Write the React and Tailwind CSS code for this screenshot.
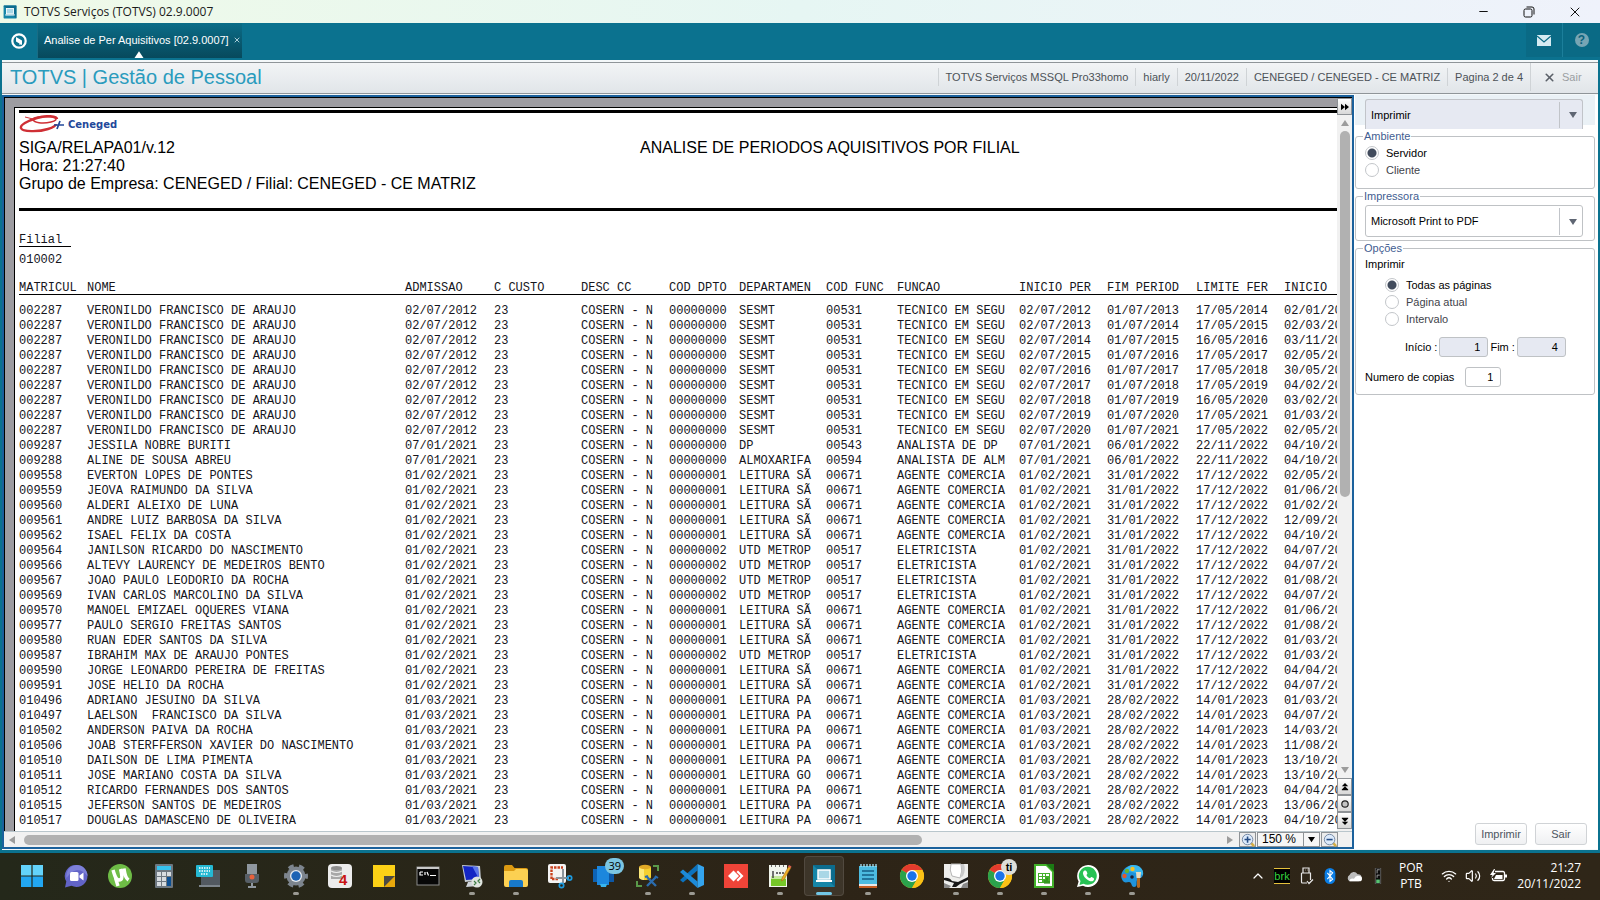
import React, { useState } from 'react';
import { ChevronUp, Wifi, Volume2, X, Minus } from 'lucide-react';

const COLUMNS = [
  { label: 'MATRICUL', width: 'w-[68px]' },
  { label: 'NOME', width: 'w-[318px]' },
  { label: 'ADMISSAO', width: 'w-[89px]' },
  { label: 'C CUSTO', width: 'w-[87px]' },
  { label: 'DESC CC', width: 'w-[88px]' },
  { label: 'COD DPTO', width: 'w-[70px]' },
  { label: 'DEPARTAMEN', width: 'w-[87px]' },
  { label: 'COD FUNC', width: 'w-[71px]' },
  { label: 'FUNCAO', width: 'w-[122px]' },
  { label: 'INICIO PER', width: 'w-[88px]' },
  { label: 'FIM PERIOD', width: 'w-[89px]' },
  { label: 'LIMITE FER', width: 'w-[88px]' },
  { label: 'INICIO', width: 'w-auto' },
];

// shared values: [admissao, cod dpto, departamento, cod func, funcao]
const SESMT = ['02/07/2012', '00000000', 'SESMT', '00531', 'TECNICO EM SEGU'];
const LEITURA_SA = ['01/02/2021', '00000001', 'LEITURA SÃ', '00671', 'AGENTE COMERCIA'];
const UTD = ['01/02/2021', '00000002', 'UTD METROP', '00517', 'ELETRICISTA'];
const LEITURA_PA = ['01/03/2021', '00000001', 'LEITURA PA', '00671', 'AGENTE COMERCIA'];
const LEITURA_GO = ['01/03/2021', '00000001', 'LEITURA GO', '00671', 'AGENTE COMERCIA'];
const DP = ['07/01/2021', '00000000', 'DP', '00543', 'ANALISTA DE DP'];
const ALMOX = ['07/01/2021', '00000000', 'ALMOXARIFA', '00594', 'ANALISTA DE ALM'];

const JAN = ['07/01/2021', '06/01/2022', '22/11/2022'];
const FEV = ['01/02/2021', '31/01/2022', '17/12/2022'];
const MAR = ['01/03/2021', '28/02/2022', '14/01/2023'];

const VERONILDO = 'VERONILDO FRANCISCO DE ARAUJO';

const EMPLOYEES = [
  ['002287', VERONILDO, SESMT, ['02/07/2012', '01/07/2013', '17/05/2014'], '02/01/20'],
  ['002287', VERONILDO, SESMT, ['02/07/2013', '01/07/2014', '17/05/2015'], '02/03/20'],
  ['002287', VERONILDO, SESMT, ['02/07/2014', '01/07/2015', '16/05/2016'], '03/11/20'],
  ['002287', VERONILDO, SESMT, ['02/07/2015', '01/07/2016', '17/05/2017'], '02/05/20'],
  ['002287', VERONILDO, SESMT, ['02/07/2016', '01/07/2017', '17/05/2018'], '30/05/20'],
  ['002287', VERONILDO, SESMT, ['02/07/2017', '01/07/2018', '17/05/2019'], '04/02/20'],
  ['002287', VERONILDO, SESMT, ['02/07/2018', '01/07/2019', '16/05/2020'], '03/02/20'],
  ['002287', VERONILDO, SESMT, ['02/07/2019', '01/07/2020', '17/05/2021'], '01/03/20'],
  ['002287', VERONILDO, SESMT, ['02/07/2020', '01/07/2021', '17/05/2022'], '02/05/20'],
  ['009287', 'JESSILA NOBRE BURITI', DP, JAN, '04/10/20'],
  ['009288', 'ALINE DE SOUSA ABREU', ALMOX, JAN, '04/10/20'],
  ['009558', 'EVERTON LOPES DE PONTES', LEITURA_SA, FEV, '02/05/20'],
  ['009559', 'JEOVA RAIMUNDO DA SILVA', LEITURA_SA, FEV, '01/06/20'],
  ['009560', 'ALDERI ALEIXO DE LUNA', LEITURA_SA, FEV, '01/02/20'],
  ['009561', 'ANDRE LUIZ BARBOSA DA SILVA', LEITURA_SA, FEV, '12/09/20'],
  ['009562', 'ISAEL FELIX DA COSTA', LEITURA_SA, FEV, '04/10/20'],
  ['009564', 'JANILSON RICARDO DO NASCIMENTO', UTD, FEV, '04/07/20'],
  ['009566', 'ALTEVY LAURENCY DE MEDEIROS BENTO', UTD, FEV, '04/07/20'],
  ['009567', 'JOAO PAULO LEODORIO DA ROCHA', UTD, FEV, '01/08/20'],
  ['009569', 'IVAN CARLOS MARCOLINO DA SILVA', UTD, FEV, '04/07/20'],
  ['009570', 'MANOEL EMIZAEL OQUERES VIANA', LEITURA_SA, FEV, '01/06/20'],
  ['009577', 'PAULO SERGIO FREITAS SANTOS', LEITURA_SA, FEV, '01/08/20'],
  ['009580', 'RUAN EDER SANTOS DA SILVA', LEITURA_SA, FEV, '01/03/20'],
  ['009587', 'IBRAHIM MAX DE ARAUJO PONTES', UTD, FEV, '01/03/20'],
  ['009590', 'JORGE LEONARDO PEREIRA DE FREITAS', LEITURA_SA, FEV, '04/04/20'],
  ['009591', 'JOSE HELIO DA ROCHA', LEITURA_SA, FEV, '04/07/20'],
  ['010496', 'ADRIANO JESUINO DA SILVA', LEITURA_PA, MAR, '01/03/20'],
  ['010497', 'LAELSON  FRANCISCO DA SILVA', LEITURA_PA, MAR, '04/07/20'],
  ['010502', 'ANDERSON PAIVA DA ROCHA', LEITURA_PA, MAR, '14/03/20'],
  ['010506', 'JOAB STERFFERSON XAVIER DO NASCIMENTO', LEITURA_PA, MAR, '11/08/20'],
  ['010510', 'DAILSON DE LIMA PIMENTA', LEITURA_PA, MAR, '13/10/20'],
  ['010511', 'JOSE MARIANO COSTA DA SILVA', LEITURA_GO, MAR, '13/10/20'],
  ['010512', 'RICARDO FERNANDES DOS SANTOS', LEITURA_PA, MAR, '04/04/20'],
  ['010515', 'JEFERSON SANTOS DE MEDEIROS', LEITURA_PA, MAR, '13/06/20'],
  ['010517', 'DOUGLAS DAMASCENO DE OLIVEIRA', LEITURA_PA, MAR, '04/10/20'],
];

const toRow = ([matricula, nome, [admissao, codDpto, dpto, codFunc, funcao], periodo, inicio]) => [
  matricula, nome, admissao, '23', 'COSERN - N', codDpto, dpto, codFunc, funcao, ...periodo, inicio,
];

/* ── Icons ── */
const Triangle = ({ dir = 'down', className }) => {
  const paths = { down: 'M0 1h8L4 7z', up: 'M0 7h8L4 1z', left: 'M7 0v8L1 4z', right: 'M1 0v8l6-4z' };
  return (
    <svg viewBox="0 0 8 8" className={className} fill="currentColor"><path d={paths[dir]} /></svg>
  );
};

const LaptopMark = () => (
  <>
    <rect x="1" y="1" width="22" height="22" rx="1" fill="#1686a8" />
    <path d="M1 1h22v22z" fill="#0c6c8e" />
    <rect x="6" y="6" width="12" height="9" fill="#a9d7e6" stroke="#fff" strokeWidth="1.500" />
    <path d="M4 16h16v2H4z" fill="#fff" />
  </>
);

const ChromeMark = () => (
  <>
    <circle cx="12" cy="12" r="12" fill="#fbc116" />
    <path d="M12 12 1.6 6A12 12 0 0 1 22.4 6z" fill="#e33b2e" />
    <path d="M12 12 1.6 6A12 12 0 0 0 12 24l5.2-9z" fill="#2ba24c" />
    <path d="M12 6h10.4A12 12 0 0 1 12 24l5.2-9z" fill="#fbc116" />
    <circle cx="12" cy="12" r="6" fill="#fff" />
    <circle cx="12" cy="12" r="4.7" fill="#1a73e8" />
  </>
);

const APPS = [
  { name: 'Iniciar', art: (
    <>
      <path d="M1 1h10.4v10.4H1zM12.6 1H23v10.4H12.6z" fill="#63d3fb" />
      <path d="M1 12.6h10.4V23H1zM12.6 12.6H23V23H12.6z" fill="#22a7f2" />
    </>
  ) },
  { name: 'Chat', art: (
    <>
      <path d="M12.5 1a11 11 0 1 1-5 20.8L1 23.500l1.300-6A11 11 0 0 1 12.500 1z" fill="#6264c7" />
      <path d="M12.500 1a11 11 0 0 1 11 11c-6-8-14-8-21 2A11 11 0 0 1 12.500 1z" fill="#7d80d8" />
      <rect x="6" y="8" width="8.500" height="9" rx="1.500" fill="#fff" />
      <path d="m15.500 11.500 4-3v8l-4-3z" fill="#fff" />
    </>
  ) },
  { name: 'uTorrent', art: (
    <>
      <circle cx="12" cy="12" r="12" fill="#6ebc46" />
      <path d="M5 6c2 7 3 10 6 10 3.500 0 3.500-3 1.500-11M16 4.500c1 6 1 9 4.500 11.500M7.500 14l2.500 8" fill="none" stroke="#fff" strokeWidth="3.400" />
    </>
  ) },
  { name: 'Calculadora', art: (
    <>
      <rect x="3" width="18" height="24" rx="1" fill="#6d7780" />
      <path d="M5 2h14v4H5z" fill="#35c2ee" />
      <path d="M5 8h4v4H5zM10 8h4v4h-4zM15 8h4v4h-4zM5 13h4v4H5zM10 13h4v4h-4zM5 18h4v4H5zM10 18h4v4h-4z" fill="#d7dce0" />
      <path d="M15 13h4v9h-4z" fill="#0b4f92" />
    </>
  ) },
  { name: 'Teclado', art: (
    <>
      <path d="M5 6h19v16H5z" fill="#525960" />
      <path d="M3 21h21v2H3z" fill="#7d858c" />
      <rect y="1" width="17" height="12" rx="1" fill="#25b9d4" />
      <path d="M3 4h11M3 7h11M5 10h7" stroke="#fff" strokeWidth="1.300" strokeDasharray="1.500 1" />
    </>
  ) },
  { name: 'Gravador de voz', art: (
    <>
      <rect x="7" width="10" height="18" fill="#8f979f" />
      <path d="M5 10h14v6a3 3 0 0 1-3 3H8a3 3 0 0 1-3-3z" fill="#575f67" />
      <circle cx="12" cy="13" r="2.500" fill="#e8613c" />
      <path d="M11 19h2v3h3v2H8v-2h3z" fill="#8f979f" />
    </>
  ) },
  { name: 'Configurações', open: true, art: (
    <>
      <circle cx="12" cy="12" r="9.500" fill="#7d858e" />
      <circle cx="12" cy="12" r="10.300" fill="none" stroke="#7d858e" strokeWidth="3.400" strokeDasharray="5.400 5.390" strokeDashoffset="2.700" />
      <circle cx="12" cy="12" r="6" fill="#e6ebf0" />
      <circle cx="12" cy="12" r="4.700" fill="#1d63b4" />
    </>
  ) },
  { name: 'Banco de dados 4', art: (
    <>
      <rect width="24" height="24" rx="4" fill="#ececec" />
      <path d="M3 4h11v11H3z" fill="#a8a8a8" />
      <path d="M3 7q5.500 3 11 0M3 11q5.500 3 11 0" fill="none" stroke="#eee" strokeWidth="1.200" />
      <ellipse cx="8.500" cy="4" rx="5.500" ry="2" fill="#8c8c8c" />
      <text x="11" y="21" fontSize="15" fontWeight="700" fill="#c91414" fontFamily="Liberation Sans, sans-serif">4</text>
    </>
  ) },
  { name: 'Notas', art: (
    <>
      <path d="M1 1h22v11L12 23H1z" fill="#fcd116" />
      <path d="M12 12h11L12 23z" fill="#4b4a44" />
      <path d="M23 12v11H12z" fill="#e8a80c" />
    </>
  ) },
  { name: 'Prompt de comando', art: (
    <>
      <rect x="1" y="3" width="22" height="18" fill="#070707" stroke="#8c8c8c" />
      <path d="M1 3h22v2H1z" fill="#c9c9c9" />
      <path d="M4 8h3M4 8v3h3M9 8v3M11 8l1.500 3.500M14 11.500h6" fill="none" stroke="#fff" strokeWidth="1.200" />
    </>
  ) },
  { name: 'Conexão remota', open: true, art: (
    <>
      <path d="M2 1 20 2l1 14-16 2z" fill="#c5ccd6" />
      <path d="m3 2 15 1 1 12-13 1z" fill="#1325c4" />
      <path d="m12 2 6 1 1 12z" fill="#5b76ea" />
      <path d="m8 18 6-1 1 3 3 2-12 1z" fill="#cfd4d9" />
      <circle cx="17" cy="18" r="5.500" fill="#dfe4df" />
      <path d="m14 17 2 2-2 2M20 15l-2 2 2 2" fill="none" stroke="#3c7a43" strokeWidth="1.200" />
    </>
  ) },
  { name: 'Explorador de arquivos', open: true, art: (
    <>
      <path d="M0 3a2 2 0 0 1 2-2h6l2.500 3H22a2 2 0 0 1 2 2v3H0z" fill="#dc9a12" />
      <path d="M0 7h10l2-2h10a2 2 0 0 1 2 2v14a2 2 0 0 1-2 2H2a2 2 0 0 1-2-2z" fill="#fcd052" />
      <path d="M5 23v-5a2 2 0 0 1 2-2h10a2 2 0 0 1 2 2v5z" fill="#1879c9" />
    </>
  ) },
  { name: 'Ferramenta de captura', art: (
    <>
      <rect width="18" height="19" rx="2" fill="#f4f4f4" />
      <path d="M3.500 15V3.500H15" fill="none" stroke="#c9421f" strokeWidth="2.400" strokeDasharray="2.500 1" />
      <path d="M4 15h7" stroke="#c9421f" strokeWidth="2.400" strokeDasharray="2.500 1" />
      <path d="M15 5v15M8 14h13" stroke="#8d959c" strokeWidth="2" />
      <circle cx="21.500" cy="14" r="2.200" fill="none" stroke="#1c9be0" strokeWidth="1.700" />
      <circle cx="13.500" cy="21.500" r="2.200" fill="none" stroke="#1c9be0" strokeWidth="1.700" />
    </>
  ) },
  { name: 'Vincular ao celular', badge: '39', art: (
    <>
      <path d="M1 5h15v13H1z" fill="#0d63b5" />
      <path d="M13 8h9v10h-9z" fill="#0c57a5" />
      <path d="M5 2h12v19H5z" fill="#1c87dd" />
      <path d="M8 20h7l-1 3H9z" fill="#39b5ee" />
    </>
  ) },
  { name: 'SQL Management Studio', open: true, art: (
    <>
      <path d="M3 3v10c0 4 12 4 12 0V3z" fill="#f5d030" />
      <path d="M3 3v10c0 2 3 3 5 3V4z" fill="#fce97a" />
      <ellipse cx="9" cy="3" rx="6" ry="2.200" fill="#e0a926" />
      <path d="M17 2h5v5M1 17v5h5" fill="none" stroke="#5a9a4a" strokeWidth="2" />
      <path d="m11 13 9 9M20 13l-9 9" stroke="#2b6cae" strokeWidth="2.400" />
      <path d="m9 13 3-1M19 12l3 2" stroke="#2b6cae" strokeWidth="2" />
    </>
  ) },
  { name: 'Visual Studio Code', open: true, art: (
    <>
      <path d="M17.500 0v6.500L3 18.500 0 16z" fill="#0c72bd" />
      <path d="M17.500 24v-6.500L3 5.500 0 8z" fill="#1d8ad8" />
      <path d="M17.500 0 24 3v18l-6.500 3z" fill="#34a4ee" />
    </>
  ) },
  { name: 'AnyDesk', art: (
    <>
      <path d="M0 0h24v24H0z" fill="#ef4438" />
      <path d="m9.500 6.500 5.500 5.500-5.500 5.500L4 12z" fill="#fff" />
      <path d="m14 6.500 5.500 5.500-5.500 5.500-1.500-1.500 4-4-4-4z" fill="#fff" />
    </>
  ) },
  { name: 'Editor de texto', open: true, art: (
    <>
      <path d="M1 1h18v22H1z" fill="#f1f5ec" />
      <path d="M3 14h15v8H3z" fill="#76c728" />
      <path d="M3 12h15v3H3z" fill="#c5e99c" />
      <path d="M5 7v7M8 9h2M11 9h2M14 9h2M3 2h1M7 2h1M11 2h1M15 2h1" stroke="#3c3c3c" strokeWidth="1.400" />
      <path d="m21 2 2 1.500-7 12-2.500 1.500.5-3z" fill="#eeae24" stroke="#a66b15" strokeWidth=".6" />
      <path d="m21 1 2.500 1.500-1 1.500-2.500-1.500z" fill="#d65b51" />
    </>
  ) },
  { name: 'TOTVS SmartClient', active: true, art: <LaptopMark /> },
  { name: 'Bloco de notas', open: true, art: (
    <>
      <path d="M3 2h18v20H3z" fill="#4cbbe0" />
      <path d="M3 21h18v3H3z" fill="#c65d22" />
      <path d="M3 20h18v2H3z" fill="#e8e8e8" />
      <path d="M5 0v3M8 0v3M11 0v3M14 0v3M17 0v3M20 0v3" stroke="#a9e1f2" strokeWidth="1.300" />
      <path d="M6 7h12M6 11h12M6 15h12" stroke="#145f85" strokeWidth="1.500" />
    </>
  ) },
  { name: 'Google Chrome', art: <ChromeMark /> },
  { name: 'Foobar', open: true, art: (
    <>
      <path d="M0 0h24v24H0z" fill="#eeeeec" />
      <path d="M7 0q-2 6 1 12l8 2q3-7 1-14z" fill="#fff" stroke="#b5b5b5" />
      <path d="M17 0q2 7-1 14l3-2q3-6 1-12z" fill="#c9c9c9" />
      <path d="M0 14q5-1 8 3l6 1 10-5v3l-8 4-4 3H8l2-4-10-3z" fill="#181818" />
      <path d="m0 19 7 3-2 2H0zM19 20l5-2v6h-7z" fill="#8a8a8a" />
    </>
  ) },
  { name: 'Google Chrome (perfil)', open: true, profile: 'ti', art: <ChromeMark /> },
  { name: 'LibreOffice Calc', open: true, art: (
    <>
      <path d="M2 0h13l7 7v17H2z" fill="#43b02a" />
      <path d="M4 2h10l6 6v14H4z" fill="#fff" />
      <path d="M14 0h8v8z" fill="#1c7a14" />
      <path d="M6 9h12v10H6z" fill="#43b02a" />
      <path d="M7 10h3v2H7zM11 10h2v2h-2zM14 10h3v2h-3zM7 13h3v2H7zM11 13h2v2h-2zM7 16h3v2H7z" fill="#fff" />
      <path d="M13 20v-4M15 20v-6M17 20v-3" stroke="#2d8a1a" strokeWidth="1.200" />
    </>
  ) },
  { name: 'WhatsApp', open: true, art: (
    <>
      <path d="M12 1a11 11 0 1 1-5 20.700L1 23l1.600-5.500A11 11 0 0 1 12 1z" fill="#fff" />
      <path d="M12 2.800a9 9 0 1 1-4.500 16.900L3.500 21l1-4A9 9 0 0 1 12 2.800z" fill="#27c254" />
      <path d="M8.500 6.500c-3 2-1 6 2 8.500s6.500 3.500 7.500.500c.5-1.500-2-2.500-2.800-2.500l-1.200 1.300c-1.800-.5-3-1.800-3.600-3.300l1-1.200c0-1-1-3.500-1.900-3.300z" fill="#fff" />
    </>
  ) },
  { name: 'Paint', open: true, art: (
    <>
      <path d="M13 1c7 0 11 5 10 10-1 4-5 3-6 5-1 3 1 7-3 7-3 0-2-5-5-5-2 0-3 1-5 0C-3 11 5 1 13 1z" fill="#1f93dc" />
      <path d="M13 1c7 0 11 5 10 10L5 6c2-3 5-5 8-5z" fill="#39b8ef" />
      <circle cx="4.500" cy="12" r="2.200" fill="#e4572e" />
      <circle cx="7" cy="7" r="2.200" fill="#69b52d" />
      <circle cx="12.500" cy="5" r="2.200" fill="#f2c026" />
      <circle cx="12" cy="13" r="1.800" fill="#223" />
      <path d="M16 8h5l-.5 6h-4z" fill="#e9dcc0" />
      <path d="M17 14h3v9q-1.500 2-3 0z" fill="#b3671e" />
    </>
  ) },
];

/* ── Window chrome ── */
const TitleBar = () => (
  <header className="flex h-[23px] shrink-0 items-center justify-between bg-linear-to-r from-[#effae8] via-[#e6f6f3] to-[#eff2fb] pr-[2px] pl-[3px]">
    <div className="flex items-center gap-[7px]">
      <svg viewBox="0 0 24 24" className="size-[14px]"><LaptopMark /></svg>
      <h1 className="font-['Open_Sans',sans-serif] text-[12px] leading-4 text-[#1b1b1b]">TOTVS Serviços (TOTVS) 02.9.0007</h1>
    </div>
    <div className="flex text-[#111]">
      <button aria-label="Minimizar" className="flex w-[45px] items-center justify-center"><Minus size={13} strokeWidth={2} /></button>
      <button aria-label="Restaurar" className="flex w-[45px] items-center justify-center">
        <svg viewBox="0 0 12 12" className="size-[12px]" fill="none" stroke="currentColor">
          <rect x="1" y="3" width="8" height="8" rx="1.500" />
          <path d="M3.500 1H9a2 2 0 0 1 2 2v5.500" />
        </svg>
      </button>
      <button aria-label="Fechar" className="flex w-[47px] items-center justify-center"><X size={16} strokeWidth={1.5} /></button>
    </div>
  </header>
);

const TabBar = () => (
  <nav className="flex h-[37px] shrink-0 items-start justify-between bg-[#0b728f]">
    <div className="flex h-[35px]">
      <button aria-label="Início" className="flex w-[38px] items-center justify-center border-r border-[#1a6d85]">
        <svg viewBox="0 0 16 16" className="size-4" fill="none" stroke="#fff">
          <circle cx="8" cy="8" r="6.700" strokeWidth="2.200" />
          <path d="m5 4 6 3.500v4.500L5 8.500z" fill="#fff" stroke="none" />
          <path d="m5 6.500 4 2.500v3" strokeWidth="1" />
        </svg>
      </button>
      <div className="relative flex w-[204px] items-center gap-1 bg-linear-to-b from-[#0b6d88] to-[#07495c] pb-[2px] pl-[6px]">
        <a href="#analise" className="whitespace-nowrap text-[11px] leading-4 text-white">Analise de Per Aquisitivos [02.9.0007]</a>
        <button aria-label="Fechar aba" className="text-[#a9cdd8]"><X size={8} strokeWidth={3} /></button>
        <Triangle dir="up" className="absolute -bottom-px left-[93px] h-[9px] w-[16px] text-white" />
      </div>
    </div>
    <div className="flex h-[34px]">
      <button aria-label="Mensagens" className="flex w-[37px] items-center justify-center border-r border-[#1c7f9b] bg-[#0a6a85]">
        <svg viewBox="0 0 14 11" className="h-[11px] w-[14px]">
          <path d="M0 0h14v11H0z" fill="#d6ebf2" />
          <path d="m0 1 7 6 7-6" fill="none" stroke="#0a6a85" strokeWidth="1.300" />
        </svg>
      </button>
      <button aria-label="Ajuda" className="flex w-[37px] items-center justify-center bg-[#0a6a85]">
        <span className="flex size-[14px] items-center justify-center rounded-full bg-[#77a5b4] text-[12px] leading-3 font-bold text-[#09627c]">?</span>
      </button>
    </div>
  </nav>
);

const StatusItem = ({ children }) => (
  <span className="border-l border-[#cfd3d6] px-[7px] whitespace-nowrap">{children}</span>
);

const AppHeader = () => (
  <div className="mt-[2px] flex h-[32px] shrink-0 items-center justify-between border-y border-[#8f9599] bg-linear-to-b from-[#f2f4f6] to-[#e1e5e9] pb-[2px] pl-2">
    <h2 className="text-[20px] leading-7 text-[#2a9bbd]">TOTVS | Gestão de Pessoal</h2>
    <div className="flex items-center text-[11px] leading-[18px] text-[#4c5257]">
      <StatusItem>TOTVS Serviços MSSQL Pro33homo</StatusItem>
      <StatusItem>hiarly</StatusItem>
      <StatusItem>20/11/2022</StatusItem>
      <StatusItem>CENEGED / CENEGED - CE MATRIZ</StatusItem>
      <StatusItem>Pagina 2 de 4</StatusItem>
      <button className="flex w-[68px] items-center gap-[6px] border-l border-[#cfd3d6] pl-3 leading-[28px] text-[#9a9ea2]">
        <X size={13} strokeWidth={3} className="text-[#5a6068]" />
        Sair
      </button>
    </div>
  </div>
);

/* ── Report ── */
const CenegedLogo = () => (
  <div className="flex h-[26px] items-start pt-[2px]">
    <svg viewBox="0 0 46 18" className="h-[18px] w-[46px]" fill="none">
      <path d="M38 4C38 1 27 0 18 3 8 6 1 10 2 13c1 4 18 4 27 1 6-2 8-4 8-5" stroke="#cf2f35" strokeWidth="2.400" />
      <path d="M14 4c0 4 10 5 18 3 5-1 6-3 4-4-5-2-20-2-22 1z" stroke="#cf2f35" strokeWidth="1.500" />
      <path d="m6 2 8 2" stroke="#cf2f35" />
      <path d="M35 10h10M41 6l-3 8" stroke="#23489a" strokeWidth="1.700" />
    </svg>
    <span className="pt-[4px] pl-[3px] font-['DejaVu_Sans',sans-serif] text-[10px] leading-[12px] font-bold text-[#23489a]">Ceneged</span>
  </div>
);

const Report = () => (
  <div className="min-h-0 min-w-0 flex-1 overflow-hidden border-t border-l border-black bg-[#9d9ca1] pt-[9px] pl-[9px]">
    <article className="overflow-hidden border-t border-l border-black bg-white pt-[2px] pb-5 pl-[4px] text-black">
      <div className="border-y-3 border-black pb-[15px]">
        <CenegedLogo />
        <div className="grid grid-cols-[621px_1fr] text-[16px] leading-[18px] whitespace-nowrap">
          <p>SIGA/RELAPA01/v.12</p>
          <h3>ANALISE DE PERIODOS AQUISITIVOS POR FILIAL</h3>
          <p>Hora: 21:27:40</p>
          <span />
          <p>Grupo de Empresa: CENEGED / Filial: CENEGED - CE MATRIZ</p>
        </div>
      </div>
      <div className="font-['Liberation_Mono',monospace] text-[12px] leading-[12px] text-[#15151c]">
        <p className="mt-[23px] w-[52px] border-b border-black">Filial</p>
        <p className="mt-[7px]">010002</p>
        <table className="mt-[16px] w-full table-fixed border-collapse text-left whitespace-pre">
          <thead>
            <tr className="border-b border-black">
              {COLUMNS.map((col) => (
                <th key={col.label} scope="col" className={`${col.width} p-0 font-normal`}>{col.label}</th>
              ))}
            </tr>
          </thead>
          <tbody className="before:block before:h-[8px] before:content-['']">
            {EMPLOYEES.map(toRow).map((row, i) => (
              <tr key={i} className="h-[15px]">
                {row.map((cell, j) => (
                  <td key={j} className="p-0">{cell}</td>
                ))}
              </tr>
            ))}
          </tbody>
        </table>
      </div>
    </article>
  </div>
);

const ScrollButton = ({ label, children }) => (
  <button aria-label={label} className="flex h-[17px] w-full shrink-0 items-center justify-center border border-[#8e9296] bg-linear-to-b from-white to-[#d8d8d8]">
    <svg viewBox="0 0 10 10" className="size-2" fill="#000">{children}</svg>
  </button>
);

const VerticalScroll = () => (
  <div className="flex w-[15px] shrink-0 flex-col items-center border-t border-black bg-[#f1f1f1] pb-[2px]">
    <ScrollButton label="Recolher painel"><path d="M0 1v8l5-4zM5 1v8l5-4z" /></ScrollButton>
    <Triangle dir="up" className="my-1 size-2 shrink-0 text-[#9c9c9c]" />
    <div className="w-[10px] flex-1">
      <div className="h-[58%] rounded-full bg-[#b1b1b1]" />
    </div>
    <Triangle dir="down" className="my-1 size-2 shrink-0 text-[#9c9c9c]" />
    <ScrollButton label="Página anterior"><path d="M5 0 1 4h8zM5 4 1 8h8zM1 8h8v1H1z" /></ScrollButton>
    <ScrollButton label="Ir para página"><circle cx="5" cy="5" r="4" fill="#c4c4c4" stroke="#222" strokeWidth="1.500" /></ScrollButton>
    <ScrollButton label="Próxima página"><path d="M5 10 1 6h8zM5 6 1 2h8zM1 1h8v1H1z" /></ScrollButton>
  </div>
);

const ZoomButton = ({ label, plus }) => (
  <button aria-label={label} className="flex h-[15px] w-[17px] items-center justify-center border border-[#8e9296] bg-[#ececec]">
    <svg viewBox="0 0 16 16" className="size-[14px] shrink-0">
      <path d="m11 11 4 4" stroke="#d4ae45" strokeWidth="3" />
      <circle cx="7.500" cy="7.500" r="6" fill="#dceafb" stroke="#6a7f9c" />
      <path d={plus ? 'M4 7.500h7M7.500 4v7' : 'M4 7.500h7'} stroke="#274d85" strokeWidth="1.800" />
    </svg>
  </button>
);

const BottomBar = () => (
  <div className="flex h-4 shrink-0 items-center border-t border-[#b9c6cc] bg-[#f1f1f1] pr-[14px]">
    <Triangle dir="left" className="mx-1 size-2 text-[#9c9c9c]" />
    <div className="ml-1 h-[10px] flex-1">
      <div className="h-full w-[75%] rounded-full bg-[#b1b1b1]" />
    </div>
    <Triangle dir="right" className="mx-[5px] size-2 text-[#9c9c9c]" />
    <div className="flex items-center gap-px">
      <ZoomButton label="Aumentar zoom" plus />
      <div className="relative flex">
        <select aria-label="Zoom" defaultValue="150" className="block h-[15px] w-[63px] appearance-none border border-[#8e9296] bg-[#f6f6f6] pl-1 text-[12px] leading-[13px] text-black">
          <option value="100">100 %</option>
          <option value="150">150 %</option>
        </select>
        <span className="pointer-events-none absolute inset-y-px right-px flex w-[16px] items-center justify-center border-l border-[#8e9296]">
          <Triangle className="size-[7px] text-black" />
        </span>
      </div>
      <ZoomButton label="Diminuir zoom" />
    </div>
  </div>
);

/* ── Print panel ── */
const Combo = ({ label, options, className }) => (
  <div className={`relative w-[218px] ${className}`}>
    <select aria-label={label} className="block h-full w-full appearance-none pl-[5px] text-[11px] text-black outline-none">
      {options.map((option) => <option key={option}>{option}</option>)}
    </select>
    <span className="pointer-events-none absolute top-[2px] right-0 bottom-px flex w-[23px] items-center justify-center border-l border-[#c1c4c9] pl-1">
      <Triangle className="size-2 text-[#5f6673]" />
    </span>
  </div>
);

const Radio = ({ name, label, checked, onChange }) => (
  <label className={`flex h-[17px] items-center gap-[7px] ${checked ? 'text-black' : 'text-[#3f444b]'}`}>
    <input
      type="radio"
      name={name}
      checked={checked}
      onChange={onChange}
      className="size-[14px] appearance-none rounded-full border border-[#c3c6ca] bg-white checked:bg-[radial-gradient(circle,#414b5c_0_4px,#fff_5px)]"
    />
    {label}
  </label>
);

const Group = ({ title, className, children }) => (
  <fieldset className={`rounded-[3px] border border-[#bfc2c5] ${className}`}>
    <legend className="ml-[7px] px-px text-[11px] leading-[14px] text-[#3f5d91]">{title}</legend>
    {children}
  </fieldset>
);

const PrintPanel = () => {
  const [ambiente, setAmbiente] = useState('Servidor');
  const [paginas, setPaginas] = useState('Todas as páginas');
  const field = 'h-[20px] rounded-[3px] border border-[#bfc2c5] pr-[7px] text-right';

  return (
    <aside className="flex w-[244px] shrink-0 flex-col bg-white pr-[3px] pl-px text-[11px] leading-[14px] text-black">
      <div className="h-[30px] bg-[#eaf1f6] pt-[4px]">
        <Combo label="Ação" options={['Imprimir']} className="ml-[10px] h-[30px] rounded-t-[3px] border border-b-0 border-[#c1c4c9] bg-[#e6e9f2]" />
      </div>
      <Group title="Ambiente" className="mt-1 h-[60px]">
        <div className="pt-px pl-[9px]">
          {['Servidor', 'Cliente'].map((item) => (
            <Radio key={item} name="ambiente" label={item} checked={ambiente === item} onChange={() => setAmbiente(item)} />
          ))}
        </div>
      </Group>
      <Group title="Impressora" className="h-[52px]">
        <Combo label="Impressora" options={['Microsoft Print to PDF']} className="mt-[2px] ml-[9px] h-[32px] rounded-[3px] border border-[#bfc2c5]" />
      </Group>
      <Group title="Opções" className="h-[154px]">
        <div className="pl-[9px]">
          <p className="pt-[2px]">Imprimir</p>
          <div className="pt-[5px] pl-[20px]">
            {['Todas as páginas', 'Página atual', 'Intervalo'].map((item) => (
              <Radio key={item} name="paginas" label={item} checked={paginas === item} onChange={() => setPaginas(item)} />
            ))}
          </div>
          <div className="flex items-center gap-[2px] pt-[10px] pl-[40px]">
            <label htmlFor="inicio">Início :</label>
            <input id="inicio" defaultValue="1" disabled className={`${field} w-[49px] bg-[#e6e9f2]`} />
            <label htmlFor="fim">Fim :</label>
            <input id="fim" defaultValue="4" disabled className={`${field} w-[49px] bg-[#e6e9f2]`} />
          </div>
          <div className="flex items-center gap-[11px] pt-[10px]">
            <label htmlFor="copias">Numero de copias</label>
            <input id="copias" defaultValue="1" className={`${field} w-[36px] bg-white`} />
          </div>
        </div>
      </Group>
      <div className="mt-auto flex justify-end gap-2 pr-[8px] pb-[4px]">
        {['Imprimir', 'Sair'].map((action) => (
          <button key={action} className="h-[22px] w-[52px] rounded-[3px] border border-[#d0d3d6] bg-linear-to-b from-white to-[#eff0f2] text-[#4d5560]">
            {action}
          </button>
        ))}
      </div>
    </aside>
  );
};

/* ── Taskbar ── */
const TaskButton = ({ app }) => (
  <button
    aria-label={app.name}
    className={`relative flex h-[40px] w-[40px] items-center justify-center rounded ${app.active ? 'border border-white/10 bg-white/8' : ''}`}
  >
    <svg viewBox="0 0 24 24" className="size-6 overflow-visible">{app.art}</svg>
    {app.badge && (
      <span className="absolute top-[2px] right-0 rounded-full bg-[#7cc6e2] px-[3px] font-['Open_Sans',sans-serif] text-[11px] leading-4 text-black">{app.badge}</span>
    )}
    {app.profile && (
      <span className="absolute top-[3px] right-[3px] flex size-4 items-center justify-center rounded-full bg-[#deded9] text-[11px] leading-3 font-bold text-black">{app.profile}</span>
    )}
    {app.open && <span className="absolute bottom-px h-[3px] w-[6px] rounded-full bg-[#9b9a93]" />}
    {app.active && <span className="absolute bottom-0 h-[3px] w-4 rounded-full bg-[#72c7e6]" />}
  </button>
);

const Tray = () => (
  <div className="flex items-center pr-[19px] font-['Open_Sans',sans-serif] text-[12px] leading-4 text-white">
    <div className="flex items-center gap-[8px]">
      <ChevronUp size={16} strokeWidth={1.8} />
      <span className="flex h-4 w-4 items-center justify-center border-y border-[#e6c13c] bg-black font-['Liberation_Sans',sans-serif] text-[11px] leading-3 text-[#35d23e]">brk</span>
      <svg viewBox="0 0 16 18" className="h-[18px] w-4" fill="none" stroke="#e8e8e8" strokeWidth="1.200">
        <path d="M5 6V1h6v5M3.500 6h9v7M3.500 6v9q0 1 1 1H9M7 3h.5M9 3h.5M9 14l2 2.500 4-4" />
      </svg>
      <svg viewBox="0 0 14 18" className="h-4 w-4">
        <rect x="1" width="12" height="18" rx="6" fill="#0a7de4" />
        <path d="m4 5.500 6 7L7 15V3l3 2.500-6 7" fill="none" stroke="#fff" strokeWidth="1.200" />
      </svg>
      <svg viewBox="0 0 18 12" className="h-[12px] w-[16px]">
        <path d="M4 12a4 4 0 0 1 0-7 5 5 0 0 1 9-1 4 4 0 0 1 1 8z" fill="#bdbdbd" />
        <path d="M4 12q0-4 5-3 2-4 6-3a3 3 0 0 1 0 6z" fill="#fff" />
      </svg>
      <svg viewBox="0 0 8 18" className="h-4 w-4">
        <path d="M1 0h6v18H1z" fill="#0b0b0b" stroke="#777" strokeWidth=".8" />
        <path d="M3 2h3M3 2v4M3 8h3M3 8v3" stroke="#aaa" />
        <path d="M2 13h4v4H2z" fill="#59c573" />
      </svg>
    </div>
    <div className="ml-[5px] w-[40px] text-center"><p>POR</p><p>PTB</p></div>
    <div className="ml-[10px] flex items-center gap-[8px]">
      <Wifi size={16} strokeWidth={2} />
      <Volume2 size={16} strokeWidth={1.8} />
      <svg viewBox="0 0 18 14" className="h-[14px] w-[18px]" fill="none" stroke="#fff" strokeWidth="1.300">
        <path d="M6 2.500h8a1.500 1.500 0 0 1 1.500 1.500v6a1.500 1.500 0 0 1-1.500 1.500H5A1.500 1.500 0 0 1 3.500 10V9" />
        <path d="M7 6h6.500v4H5z" fill="#fff" stroke="none" />
        <path d="M5 0 1 6h2.500L2 9l5-5H4.500L6 0z" fill="#fff" stroke="none" />
        <path d="M17 5.500v3" strokeWidth="2" />
      </svg>
    </div>
    <div className="w-[74px] text-right"><p>21:27</p><p>20/11/2022</p></div>
  </div>
);

const Taskbar = () => (
  <footer className="flex h-[47px] shrink-0 items-center justify-between bg-linear-to-r from-[#24281a] via-[#2d2417] to-[#2f2618] pb-[2px] pl-3">
    <div className="flex gap-1">
      {APPS.map((app) => <TaskButton key={app.name} app={app} />)}
    </div>
    <Tray />
  </footer>
);

const App = () => {
  return (
    <div className="flex h-screen flex-col overflow-hidden bg-[#0b728f] font-['Liberation_Sans',Arial,sans-serif]">
      <TitleBar />
      <TabBar />
      <main className="mx-[2px] mb-[3px] flex min-h-0 flex-1 flex-col bg-[#f4f8fa] pb-px">
        <AppHeader />
        <div className="flex min-h-0 flex-1 pt-px">
          <section className="flex min-w-0 flex-1 flex-col border-2 border-[#1b619c]">
            <div className="flex min-h-0 flex-1">
              <Report />
              <VerticalScroll />
            </div>
            <BottomBar />
          </section>
          <PrintPanel />
        </div>
      </main>
      <Taskbar />
    </div>
  );
};

export default App;
